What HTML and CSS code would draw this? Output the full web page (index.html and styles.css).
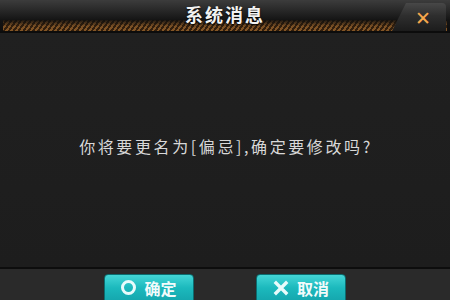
FILE: index.html
```html
<!DOCTYPE html>
<html>
<head>
<meta charset="utf-8">
<link rel="stylesheet" href="styles.css">
</head>
<body>
<div class="dialog">
  <div class="titlebar">
    <div class="title">系统消息</div>
    <div class="close-tab"><span class="close">✕</span></div>
    <div class="stripes"></div>
  </div>
  <div class="content">
    <p class="message">你将要更名为[偏忌],确定要修改吗?</p>
  </div>
  <div class="footer">
    <button class="btn"><span class="ring"></span>确定</button>
    <button class="btn"><svg class="xicon" viewBox="0 0 16 16"><path d="M3 3 L13 13 M13 3 L3 13" stroke="#e8fbfb" stroke-width="3.4" stroke-linecap="square"/></svg>取消</button>
  </div>
</div>
</body>
</html>
```
FILE: styles.css
```css
html, body {
  margin: 0;
  padding: 0;
  background: #1a1a1a;
}
.dialog {
  width: 450px;
  height: 300px;
  display: flex;
  flex-direction: column;
  font-family: "Noto Sans CJK SC", "Liberation Sans", sans-serif;
  background: #1f1f1f;
  box-shadow: inset 2px 0 0 #161616, inset 3px 0 0 #4a4a4a, inset -2px 0 0 #161616, inset -3px 0 0 #404040;
  overflow: hidden;
}
.titlebar {
  position: relative;
  height: 31px;
  flex: none;
  background: linear-gradient(#3c3c3c 0%, #2a2a2a 30%, #141414 65%, #0e0e0e 100%);
  border-bottom: 2px solid #0c0c0c;
  display: flex;
  justify-content: center;
}
.title {
  position: relative;
  z-index: 2;
  color: #f2f2f2;
  font-size: 18px;
  font-weight: bold;
  line-height: 28px;
  letter-spacing: 2px;
  text-shadow: 0 1px 2px #000;
}
.stripes {
  position: absolute;
  left: 3px;
  right: 3px;
  bottom: 0;
  height: 11px;
  background:
    linear-gradient(rgba(14,14,14,0.9), rgba(14,14,14,0.2) 55%, rgba(0,0,0,0.1)),
    repeating-linear-gradient(-55deg, #94602a 0 2px, #3a230e 2px 4px);
  z-index: 1;
}
.close-tab {
  position: absolute;
  right: 4px;
  top: 3px;
  width: 54px;
  height: 28px;
  background: linear-gradient(#484848, #2e2e2e 45%, #1c1c1c);
  clip-path: polygon(14px 0, 100% 0, 100% 100%, 0 100%);
  border-radius: 0 4px 0 0;
  z-index: 3;
  display: flex;
  align-items: center;
  justify-content: center;
}
.close {
  color: #f7a84c;
  font-size: 19px;
  font-weight: bold;
  margin-left: 8px;
  margin-top: 1px;
  font-family: "DejaVu Sans", sans-serif;
}
.content {
  flex: 1;
  display: flex;
  align-items: center;
  justify-content: center;
  background: linear-gradient(#202020, #1d1d1d);
}
.message {
  margin: 0;
  color: #d8d8d8;
  font-size: 16px;
  font-family: "Noto Sans CJK SC", sans-serif;
  letter-spacing: 2.6px;
  position: relative;
  top: -4px;
  left: 1px;
}
.footer {
  flex: none;
  height: 33px;
  border-top: 2px solid #0d0d0d;
  background: #2a2a2a;
  display: flex;
  gap: 62px;
  padding-left: 104px;
  padding-top: 5px;
  box-sizing: border-box;
}
.btn {
  width: 90px;
  height: 34px;
  border: 1px solid #0b6d70;
  border-radius: 4px;
  background: linear-gradient(#44d6d6 0%, #1cb9bd 40%, #129ea6 100%);
  color: #f2fbfb;
  font-family: "Noto Sans CJK SC", sans-serif;
  font-size: 16px;
  font-weight: bold;
  display: flex;
  align-items: flex-start;
  justify-content: center;
  gap: 8px;
  padding: 3px 0 0 0;
  line-height: 20px;
}
.ring {
  width: 9px;
  height: 9px;
  border: 3px solid #e8fbfb;
  border-radius: 50%;
  margin-top: 2px;
}
.xicon {
  width: 16px;
  height: 16px;
  margin-top: 2px;
}
```
